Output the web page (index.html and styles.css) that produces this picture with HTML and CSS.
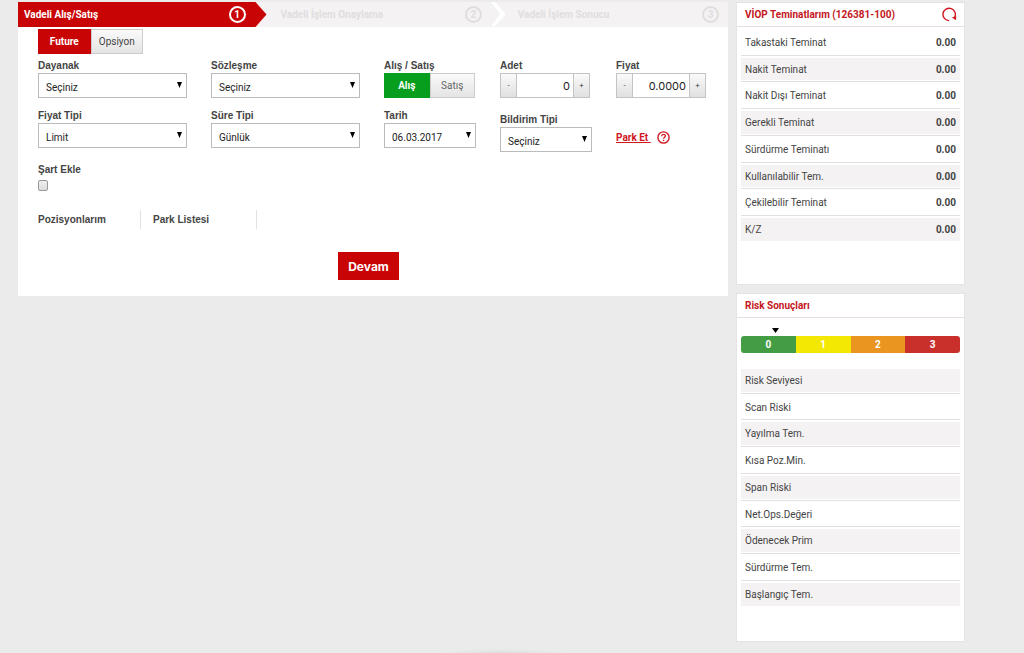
FILE: index.html
```html
<!DOCTYPE html>
<html lang="tr">
<head>
<meta charset="utf-8">
<title>Vadeli Alış/Satış</title>
<link rel="stylesheet" href="styles.css">
</head>
<body>
<div class="page">
  <main class="order">
    <ol class="steps">
      <li class="step step-active"><span>Vadeli Alış/Satış</span><span class="num">1</span></li>
      <li class="step"><span>Vadeli İşlem Onaylama</span><span class="num">2</span>
        <svg class="chevron" viewBox="0 0 16 24" width="16" height="24" aria-hidden="true"><path d="M0 0H4L15 12L4 24H0L9 12Z" fill="#fff"/></svg></li>
      <li class="step"><span>Vadeli İşlem Sonucu</span><span class="num">3</span></li>
    </ol>
    <form class="form">
      <div class="toggle kind">
        <button type="button" class="seg seg-red">Future</button><button type="button" class="seg">Opsiyon</button>
      </div>
      <div class="fields">
        <div class="field"><label for="dayanak">Dayanak</label><div class="select"><select id="dayanak"><option>Seçiniz</option></select></div></div>
        <div class="field"><label for="sozlesme">Sözleşme</label><div class="select"><select id="sozlesme"><option>Seçiniz</option></select></div></div>
        <div class="field"><span class="label">Alış / Satış</span><div class="toggle side"><button type="button" class="seg seg-green">Alış</button><button type="button" class="seg">Satış</button></div></div>
        <div class="field"><label for="adet">Adet</label><div class="stepper"><button type="button">-</button><input id="adet" type="text" value="0"><button type="button">+</button></div></div>
        <div class="field"><label for="fiyat">Fiyat</label><div class="stepper"><button type="button">-</button><input id="fiyat" type="text" value="0.0000"><button type="button">+</button></div></div>
        <div class="field"><label for="fiyattipi">Fiyat Tipi</label><div class="select"><select id="fiyattipi"><option>Limit</option></select></div></div>
        <div class="field"><label for="suretipi">Süre Tipi</label><div class="select"><select id="suretipi"><option>Günlük</option></select></div></div>
        <div class="field"><label for="tarih">Tarih</label><div class="select"><select id="tarih"><option>06.03.2017</option></select></div></div>
        <div class="field field-low"><label for="bildirim">Bildirim Tipi</label><div class="select"><select id="bildirim"><option>Seçiniz</option></select></div></div>
        <div class="park"><a href="#">Park Et&nbsp;</a>
          <svg viewBox="0 0 13 13" width="13" height="13" aria-hidden="true"><circle cx="6.5" cy="6.5" r="5.6" fill="none" stroke="#d0171f" stroke-width="1.4"/><path d="M4.7 5.2C4.7 2.9 8.4 2.9 8.4 5C8.4 6.3 6.6 6.2 6.6 7.8M6.6 8.8V10" fill="none" stroke="#d0171f" stroke-width="1.3"/></svg></div>
      </div>
      <div class="condition"><label for="sart">Şart Ekle</label><input id="sart" type="checkbox"></div>
      <nav class="lists"><a href="#">Pozisyonlarım</a><a href="#">Park Listesi</a></nav>
      <button type="submit" class="submit">Devam</button>
    </form>
  </main>
  <aside class="sidebar">
    <section class="card card-margin">
      <header class="card-head"><h2>VİOP Teminatlarım (126381-100)</h2>
        <button type="button" class="refresh" aria-label="Yenile"><svg viewBox="0 0 16 15" width="16" height="15" aria-hidden="true"><path d="M8.2 13.6A6.2 6.2 0 1 1 13.6 10.4" fill="none" stroke="#d0171f" stroke-width="1.4"/><path d="M10.8 10.2L15.4 9.6L14.8 13.2Z" fill="#d0171f"/></svg></button></header>
      <table class="rows">
        <tr><th scope="row">Takastaki Teminat</th><td>0.00</td></tr>
        <tr class="shade"><th scope="row">Nakit Teminat</th><td>0.00</td></tr>
        <tr><th scope="row">Nakit Dışı Teminat</th><td>0.00</td></tr>
        <tr class="shade"><th scope="row">Gerekli Teminat</th><td>0.00</td></tr>
        <tr><th scope="row">Sürdürme Teminatı</th><td>0.00</td></tr>
        <tr class="shade"><th scope="row">Kullanılabilir Tem.</th><td>0.00</td></tr>
        <tr><th scope="row">Çekilebilir Teminat</th><td>0.00</td></tr>
        <tr class="shade"><th scope="row">K/Z</th><td>0.00</td></tr>
      </table>
    </section>
    <section class="card card-risk">
      <header class="card-head"><h2>Risk Sonuçları</h2></header>
      <div class="pointer"></div>
      <div class="scale"><span class="l0">0</span><span class="l1">1</span><span class="l2">2</span><span class="l3">3</span></div>
      <table class="rows">
        <tr class="shade"><th scope="row">Risk Seviyesi</th><td></td></tr>
        <tr><th scope="row">Scan Riski</th><td></td></tr>
        <tr class="shade"><th scope="row">Yayılma Tem.</th><td></td></tr>
        <tr><th scope="row">Kısa Poz.Min.</th><td></td></tr>
        <tr class="shade"><th scope="row">Span Riski</th><td></td></tr>
        <tr><th scope="row">Net.Ops.Değeri</th><td></td></tr>
        <tr class="shade"><th scope="row">Ödenecek Prim</th><td></td></tr>
        <tr><th scope="row">Sürdürme Tem.</th><td></td></tr>
        <tr class="shade"><th scope="row">Başlangıç Tem.</th><td></td></tr>
      </table>
    </section>
  </aside>
</div>
</body>
</html>
```
FILE: styles.css
```css
* { box-sizing: border-box; }
body {
  margin: 0;
  min-height: 100vh;
  background: radial-gradient(ellipse 60px 4px at 49% 100%, #dedede, #ebebeb) #ebebeb;
  font-family: Roboto, "Liberation Sans", sans-serif;
  font-size: 10px;
  color: #444;
}
button, input, select { font-family: inherit; font-size: inherit; margin: 0; border-radius: 0; }
.page { display: flex; align-items: flex-start; gap: 8px; padding: 2px 59px 0 18px; }

.order { flex: 1; min-width: 0; background: #fff; }
.steps { display: flex; height: 25px; margin: 0; padding: 0; list-style: none; background: #f4f2f3; }
.step {
  position: relative;
  flex: 1;
  display: flex;
  align-items: center;
  justify-content: space-between;
  padding: 0 9px 0 28px;
  color: #e0dedf;
  font-weight: 700;
}
.step-active {
  flex: 0 0 35%;
  padding: 0 21px 0 6px;
  background: #c90404;
  color: #fff;
  clip-path: polygon(0 0, calc(100% - 11px) 0, 100% 50%, calc(100% - 11px) 100%, 0 100%);
}
.step + .step { padding-left: 14px; }
.step:last-child { padding-left: 20px; }
.step:nth-child(2) { padding-right: 16px; }
.num {
  display: grid;
  place-items: center;
  width: 17px;
  height: 17px;
  border: 2px solid currentColor;
  border-radius: 50%;
}
.chevron { position: absolute; right: -9px; top: 0; }

.form { padding: 2px 20px 16px; }
.toggle { display: flex; }
.kind { width: 105px; height: 25px; }
.seg {
  flex: 1;
  padding: 0;
  border: 1px solid #ccc;
  background: linear-gradient(#fafafa, #e4e4e4);
  color: #444;
}
.seg-red { border-color: #c90404; background: #c90404; color: #fff; font-weight: 700; }
.seg-green { border-color: #069e1c; background: #069e1c; color: #fff; font-weight: 700; }
.side { width: 91px; height: 25px; }
.side .seg { color: #666; }
.side .seg-green { color: #fff; }

.fields {
  display: grid;
  grid-template-columns: 149fr 149fr 92fr 92fr 92fr;
  gap: 11px 24px;
  margin-top: 5px;
}
label, .label, .lists a {
  display: block;
  height: 14px;
  line-height: 14px;
  font-family: "Liberation Sans", Arial, sans-serif;
  font-weight: 700;
  color: #444;
}
.field-low { padding-top: 4px; }
.select { position: relative; }
.select::after {
  content: "";
  position: absolute;
  right: 5px;
  top: 9px;
  width: 5px;
  height: 6px;
  background: #000;
  clip-path: polygon(0 0, 100% 0, 50% 100%);
  pointer-events: none;
}
.select select {
  appearance: none;
  display: block;
  width: 100%;
  height: 25px;
  padding: 4px 16px 0 7px;
  border: 1px solid #bbb;
  background: #fff;
  color: #222;
}
.stepper { display: flex; width: 90px; height: 25px; }
.stepper button {
  width: 17px;
  padding: 0;
  border: 1px solid #c4c4c4;
  background: linear-gradient(#fafafa, #e0e0e0);
  color: #444;
  font-size: 8px;
}
.stepper input {
  flex: 1;
  min-width: 0;
  padding: 0 3px;
  border: solid #c4c4c4;
  border-width: 1px 0;
  font-family: Inter, sans-serif;
  font-size: 11px;
  text-align: right;
  color: #222;
}
.park { display: flex; align-items: center; gap: 6px; padding-top: 14px; font-weight: 700; }
.park a { color: #d0171f; }
.condition { margin-top: 11px; }
.condition input {
  appearance: none;
  display: block;
  width: 10px;
  height: 11px;
  margin-top: 3px;
  border: 1px solid #999;
  border-radius: 2px;
  background: linear-gradient(#eee, #ddd);
}
.lists { display: flex; margin-top: 19px; }
.lists a {
  width: 103px;
  height: 19px;
  line-height: 20px;
  border-right: 1px solid #e2e2e2;
  text-decoration: none;
}
.lists a + a { width: 116px; padding-left: 12px; }
.submit {
  display: block;
  width: 61px;
  height: 28px;
  margin: 23px auto 0 300px;
  padding: 0;
  border: 0;
  background: #c90404;
  color: #fff;
  font-family: Inter, sans-serif;
  font-size: 12px;
  font-weight: 700;
}

.sidebar { flex: 0 0 229px; display: flex; flex-direction: column; gap: 8px; }
.card { background: #fff; border: 1px solid #e4e4e4; }
.card-head {
  display: flex;
  align-items: center;
  justify-content: space-between;
  height: 24px;
  padding: 0 7px 0 8px;
  border-bottom: 1px solid #eadfe0;
}
.card-head h2 { margin: 0; font-size: 10px; font-weight: 700; color: #c4161c; }
.refresh { display: flex; padding: 0; border: 0; background: none; }
.card-margin { padding-bottom: 41px; }
.card-risk { padding-bottom: 33px; }
.rows { width: calc(100% - 8px); margin: 2px 4px 0; border-spacing: 0; }
.rows tr { height: 27px; }
.rows tr:nth-child(4n+2) { height: 26px; }
.rows th, .rows td { padding: 0 4px; text-align: left; font-weight: 400; box-shadow: inset 0 -1px #e2dfe0; }
.rows td { text-align: right; font-weight: 700; }
.rows .shade > * {
  background: #f4f2f3;
  box-shadow: inset 0 -1px #e2dfe0, inset 0 -2px #fff, inset 0 2px #fff;
}
.rows tr:last-child > * { box-shadow: inset 0 -2px #fff, inset 0 2px #fff; }
.pointer {
  width: 7px;
  height: 5px;
  margin: 10px 0 3px 35px;
  background: #000;
  clip-path: polygon(0 0, 100% 0, 50% 100%);
}
.scale {
  display: grid;
  grid-template-columns: repeat(4, 1fr);
  height: 17px;
  margin: 0 4px 14px;
  border-radius: 3px;
  overflow: hidden;
  line-height: 17px;
  text-align: center;
  font-weight: 700;
  color: #fff;
}
.l0 { background: #449d44; }
.l1 { background: #f2e803; }
.l2 { background: #ea951f; }
.l3 { background: #c9302c; }
```
